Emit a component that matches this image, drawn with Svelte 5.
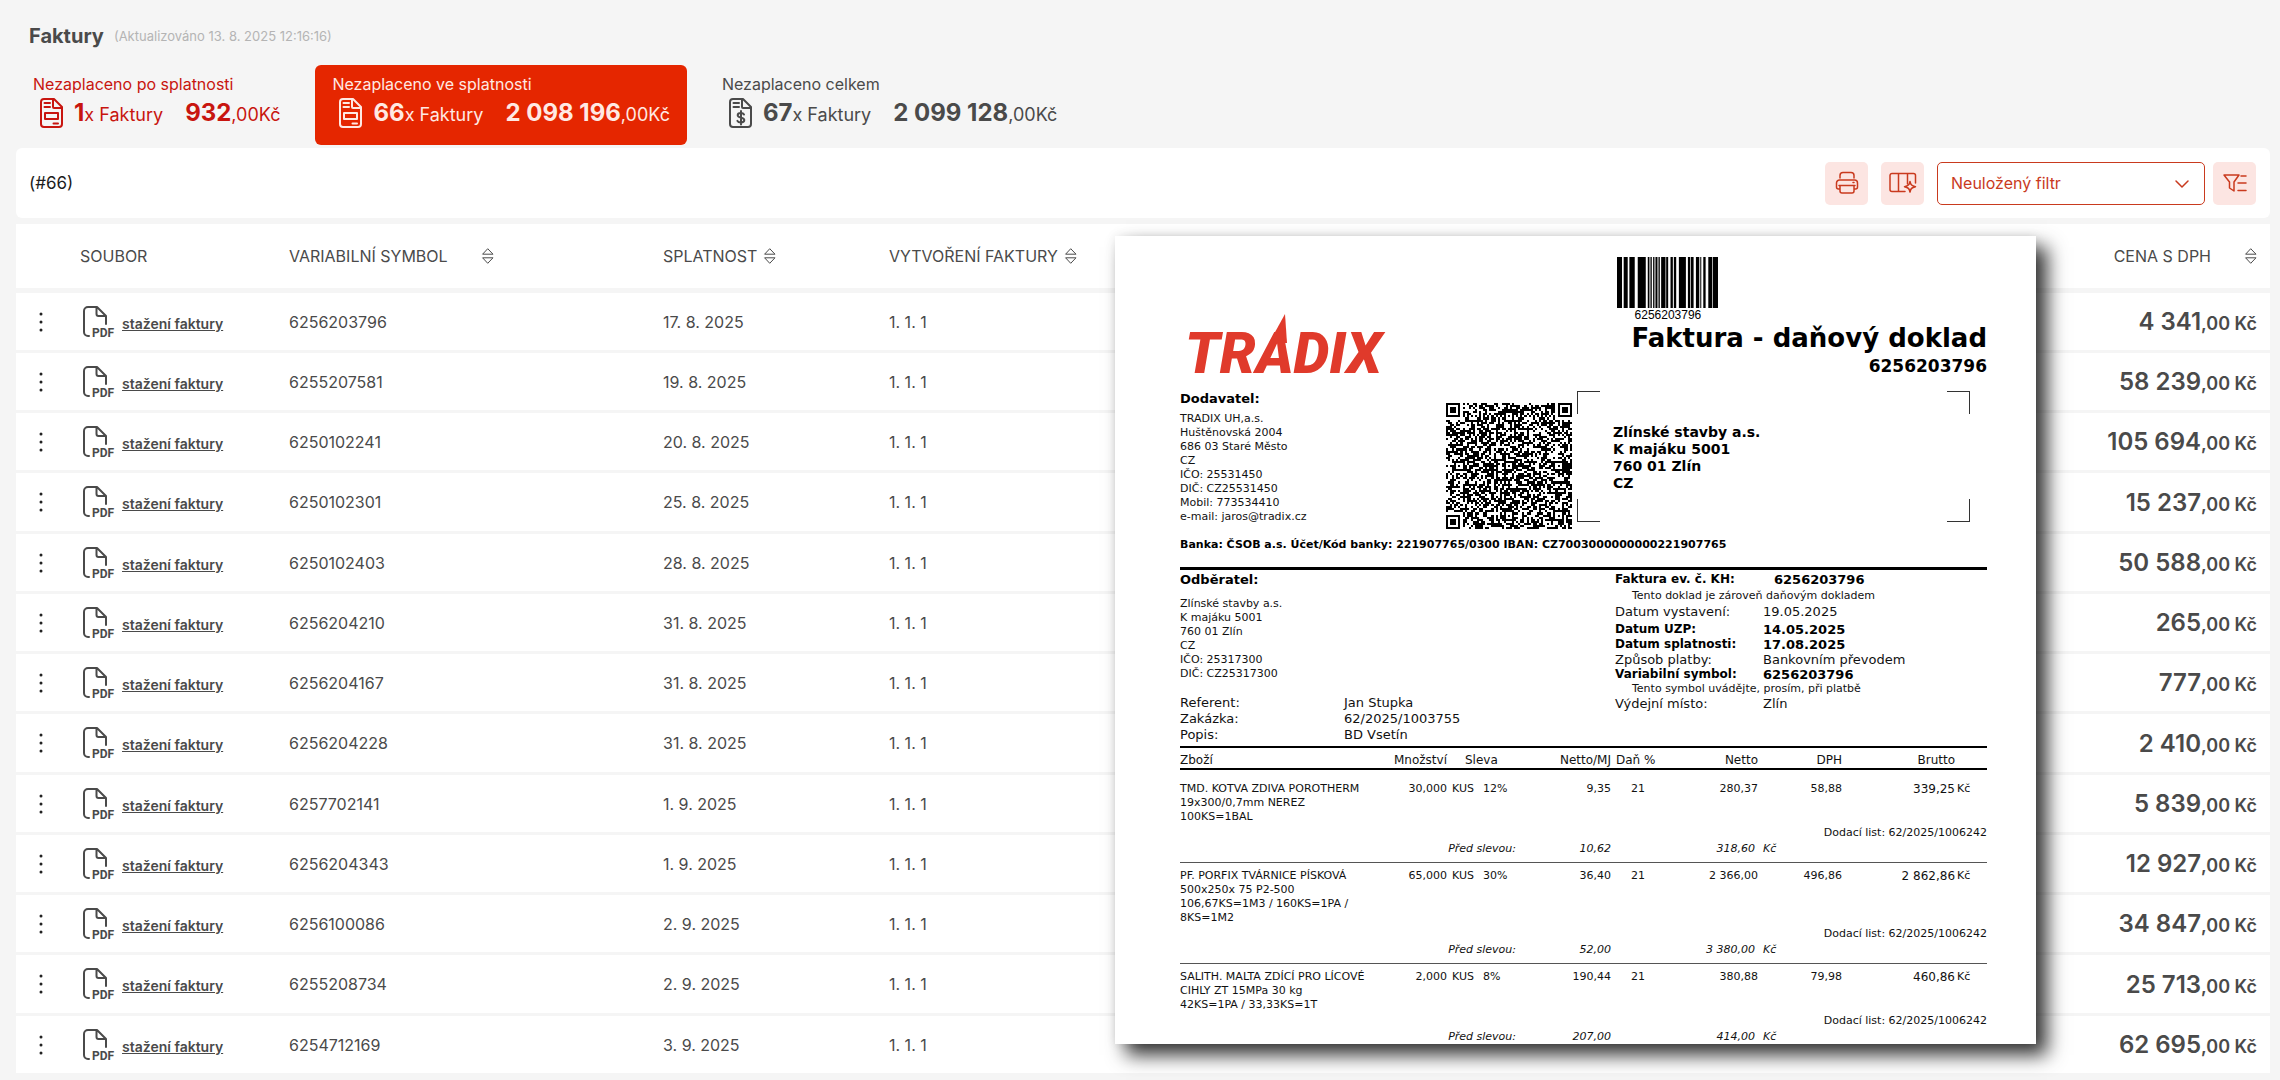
<script lang="ts">
	interface Invoice {
		symbol: string;
		due: string;
		price: string;
	}

	interface Item {
		lines: string[];
		qty: string;
		discount: string;
		unitPrice: string;
		net: string;
		vat: string;
		gross: string;
		unitBefore: string;
		netBefore: string;
	}

	const tabs = [
		{ label: 'Nezaplaceno po splatnosti', count: 1, amount: '932', kind: 'overdue' },
		{ label: 'Nezaplaceno ve splatnosti', count: 66, amount: '2 098 196', kind: 'pending' },
		{ label: 'Nezaplaceno celkem', count: 67, amount: '2 099 128', kind: 'total' }
	];

	let activeTab = $state('pending');

	const invoices: Invoice[] = [
		{ symbol: '6256203796', due: '17. 8. 2025', price: '4 341' },
		{ symbol: '6255207581', due: '19. 8. 2025', price: '58 239' },
		{ symbol: '6250102241', due: '20. 8. 2025', price: '105 694' },
		{ symbol: '6250102301', due: '25. 8. 2025', price: '15 237' },
		{ symbol: '6250102403', due: '28. 8. 2025', price: '50 588' },
		{ symbol: '6256204210', due: '31. 8. 2025', price: '265' },
		{ symbol: '6256204167', due: '31. 8. 2025', price: '777' },
		{ symbol: '6256204228', due: '31. 8. 2025', price: '2 410' },
		{ symbol: '6257702141', due: '1. 9. 2025', price: '5 839' },
		{ symbol: '6256204343', due: '1. 9. 2025', price: '12 927' },
		{ symbol: '6256100086', due: '2. 9. 2025', price: '34 847' },
		{ symbol: '6255208734', due: '2. 9. 2025', price: '25 713' },
		{ symbol: '6254712169', due: '3. 9. 2025', price: '62 695' }
	];

	const supplier = [
		'TRADIX UH,a.s.', 'Huštěnovská 2004', '686 03 Staré Město', 'CZ',
		'IČO: 25531450', 'DIČ: CZ25531450', 'Mobil: 773534410', 'e-mail: jaros@tradix.cz'
	];
	const address = ['Zlínské stavby a.s.', 'K majáku 5001', '760 01 Zlín', 'CZ'];
	const customer = [...address, 'IČO: 25317300', 'DIČ: CZ25317300'];

	const items: Item[] = [
		{
			lines: ['TMD. KOTVA ZDIVA POROTHERM', '19x300/0,7mm NEREZ', '100KS=1BAL'],
			qty: '30,000', discount: '12%', unitPrice: '9,35', net: '280,37', vat: '58,88',
			gross: '339,25', unitBefore: '10,62', netBefore: '318,60'
		},
		{
			lines: ['PF. PORFIX TVÁRNICE PÍSKOVÁ', '500x250x 75 P2-500', '106,67KS=1M3 / 160KS=1PA /', '8KS=1M2'],
			qty: '65,000', discount: '30%', unitPrice: '36,40', net: '2 366,00', vat: '496,86',
			gross: '2 862,86', unitBefore: '52,00', netBefore: '3 380,00'
		},
		{
			lines: ['SALITH. MALTA ZDÍCÍ PRO LÍCOVÉ', 'CIHLY ZT 15MPa 30 kg', '42KS=1PA / 33,33KS=1T'],
			qty: '2,000', discount: '8%', unitPrice: '190,44', net: '380,88', vat: '79,98',
			gross: '460,86', unitBefore: '207,00', netBefore: '414,00'
		}
	];

	// [start, width] of every bar
	const bars = [
		[0, 15], [20, 12], [37, 16], [62, 24], [92, 5], [100, 4], [108, 4], [115, 6], [124, 4],
		[132, 13], [147, 6], [160, 7], [170, 7], [185, 21], [212, 7], [221, 8], [236, 10],
		[249, 3], [258, 7], [273, 12], [287, 15]
	];

	const QR_SIZE = 61;

	function squareRing(dx: number, dy: number): number {
		return Math.max(Math.abs(dx), Math.abs(dy));
	}

	// Finder and alignment squares sit on a seeded module pattern
	function buildQr(): string {
		const finders = [[3, 3], [QR_SIZE - 4, 3], [3, QR_SIZE - 4]];
		const aligns = [[30, 6], [6, 30], [30, 30], [54, 30], [30, 54], [54, 54]];
		let seed = 6256;
		let d = '';
		for (let y = 0; y < QR_SIZE; y++) {
			for (let x = 0; x < QR_SIZE; x++) {
				seed = (seed * 1103515245 + 12345) % 2147483648;
				let on = (seed >> 12) % 100 < 56;
				if (x === 6 || y === 6) on = (x + y) % 2 === 0;
				for (const [cx, cy] of aligns) {
					const r = squareRing(x - cx, y - cy);
					if (r <= 2) on = r !== 1;
				}
				for (const [cx, cy] of finders) {
					const r = squareRing(x - cx, y - cy);
					if (r <= 4) on = r === 3 || r <= 1;
				}
				if (on) d += `M${x} ${y}h1v1h-1z`;
			}
		}
		return d;
	}

	const qrPath = buildQr();
</script>

{#snippet sortIcon()}
	<svg class="sort-icon" viewBox="0 0 12 16" width="12" height="16" aria-hidden="true">
		<path d="M6 1 11 6.2H1zM1 9.8h10L6 15z" />
	</svg>
{/snippet}

<main class="page">
	<header class="head">
		<h1>Faktury</h1>
		<span class="updated">(Aktualizováno 13. 8. 2025 12:16:16)</span>
	</header>

	<nav class="tabs">
		{#each tabs as tab}
			<button
				type="button"
				class="tab {tab.kind}"
				class:active={activeTab === tab.kind}
				onclick={() => (activeTab = tab.kind)}
			>
				<span class="tab-label">{tab.label}</span>
				<span class="tab-row">
					<svg class="tab-icon" viewBox="0 0 23 30" width="23" height="30" aria-hidden="true">
						<path d="M4 1h10l8 8v17a3 3 0 0 1-3 3H4a3 3 0 0 1-3-3V4a3 3 0 0 1 3-3z" />
						<path d="M13 1v8a1 1 0 0 0 1 1h8M4.500 5H10M4.500 9H10" />
						{#if tab.kind === 'total'}
							<path d="M15 16.500c-.5-1-1.700-1.500-3.200-1.500-1.900 0-3.100.9-3.100 2.300 0 3.200 6.600 1.400 6.600 4.800 0 1.500-1.400 2.400-3.400 2.400-1.700 0-3-.6-3.500-1.700M12 13v13.500" />
						{:else}
							<path d="M5 15h13v6H5zM13.500 25.500H18" />
						{/if}
					</svg>
					<span class="tab-count"><b>{tab.count}</b>x Faktury</span>
					<span class="tab-amount"><b>{tab.amount}</b>,00Kč</span>
				</span>
			</button>
		{/each}
	</nav>

	<section class="toolbar">
		<span class="total-count">(#66)</span>
		<div class="tools">
			<button type="button" class="tool" aria-label="Tisk">
				<svg viewBox="0 0 24 24" width="24" height="24" aria-hidden="true">
					<path d="M5 7V4.500a3 3 0 0 1 3-3h8a3 3 0 0 1 3 3V7M5 18H3.500A2 2 0 0 1 1.500 16v-4a3 3 0 0 1 3-3h15a3 3 0 0 1 3 3v4a2 2 0 0 1-2 2H19M4 14.500h16M5 14.500V20a2 2 0 0 0 2 2h10a2 2 0 0 0 2-2v-5.500M18 11.500h1" />
				</svg>
			</button>
			<button type="button" class="tool" aria-label="Sloupce">
				<svg viewBox="0 0 28 24" width="28" height="24" aria-hidden="true">
					<path d="M16 20.500H3a2 2 0 0 1-2-2v-14a2 2 0 0 1 2-2h21.500a2 2 0 0 1 2 2V12M9.500 2.500v18M18.500 2.500V13" />
					<path d="M21 10.500c.7 3.400 1.700 4.300 5.500 5.200-3.800.9-4.800 1.900-5.500 5.300-.7-3.400-1.700-4.400-5.500-5.300 3.800-.9 4.800-1.800 5.500-5.200z" />
				</svg>
			</button>
			<div class="filter">
				<select aria-label="Filtr">
					<option>Neuložený filtr</option>
				</select>
				<svg class="chevron" viewBox="0 0 14 8" width="14" height="8" aria-hidden="true">
					<path d="M1 1l6 6 6-6" />
				</svg>
			</div>
			<button type="button" class="tool" aria-label="Nastavení filtru">
				<svg viewBox="0 0 24 24" width="24" height="24" aria-hidden="true">
					<path d="M1 4h15l-5 7v9l-4.500-3v-6zM18 5h5M15 12h8M15 19.500h8" />
				</svg>
			</button>
		</div>
	</section>

	<table class="invoices">
		<colgroup>
			<col class="col-menu" />
			<col class="col-file" />
			<col class="col-symbol" />
			<col class="col-due" />
			<col class="col-created" />
			<col />
		</colgroup>
		<thead>
			<tr>
				<th></th>
				<th>SOUBOR</th>
				<th><span class="th-wide">VARIABILNÍ SYMBOL {@render sortIcon()}</span></th>
				<th><span class="th-sort">SPLATNOST {@render sortIcon()}</span></th>
				<th><span class="th-sort">VYTVOŘENÍ FAKTURY {@render sortIcon()}</span></th>
				<th class="price-head"><span class="th-wide">CENA S DPH {@render sortIcon()}</span></th>
			</tr>
		</thead>
		<tbody>
			{#each invoices as invoice}
				<tr>
					<td>
						<button type="button" class="menu" aria-label="Možnosti">
							<svg viewBox="0 0 4 20" width="4" height="20" aria-hidden="true">
								<circle cx="2" cy="2" r="1.500" />
								<circle cx="2" cy="10" r="1.500" />
								<circle cx="2" cy="18" r="1.500" />
							</svg>
						</button>
					</td>
					<td>
						<a href="#{invoice.symbol}" class="download">
							<svg viewBox="0 0 31 32" width="31" height="32" aria-hidden="true">
								<path d="M6 30H5a4 4 0 0 1-4-4V5a4 4 0 0 1 4-4h9l9 9v8M13.500 1v7a2 2 0 0 0 2 2H23" />
								<text x="9" y="31">PDF</text>
							</svg>
							<span>stažení faktury</span>
						</a>
					</td>
					<td>{invoice.symbol}</td>
					<td>{invoice.due}</td>
					<td>1. 1. 1</td>
					<td class="price"><b>{invoice.price}</b>,00 Kč</td>
				</tr>
			{/each}
		</tbody>
	</table>

	<article class="doc">
		<header class="doc-head">
			<svg class="logo" viewBox="0 0 204 60" width="204" height="60" role="img" aria-label="TRADIX">
				<text x="-3" y="60">TRADIX</text>
				<polygon points="97,1 99,30 81,30" />
			</svg>
			<div class="doc-title">
				<div class="barcode">
					<svg viewBox="0 0 302 51" width="101" height="51" preserveAspectRatio="none" aria-hidden="true">
						{#each bars as [x, w]}
							<rect {x} y="0" width={w} height="51" />
						{/each}
					</svg>
					<span>6256203796</span>
				</div>
				<h2>Faktura - daňový doklad</h2>
				<strong>6256203796</strong>
			</div>
		</header>

		<section class="parties">
			<div class="party">
				<h3>Dodavatel:</h3>
				{#each supplier as line}
					<p>{line}</p>
				{/each}
			</div>
			<svg class="qr" viewBox="0 0 61 61" width="126" height="126" shape-rendering="crispEdges" aria-hidden="true">
				<path d={qrPath} />
			</svg>
			<div class="window">
				<i class="corner tl"></i>
				<i class="corner tr"></i>
				<i class="corner bl"></i>
				<i class="corner br"></i>
				{#each address as line}
					<p>{line}</p>
				{/each}
			</div>
		</section>

		<p class="bank">Banka: ČSOB a.s. Účet/Kód banky: 221907765/0300 IBAN: CZ7003000000000221907765</p>

		<section class="details">
			<div>
				<div class="party customer">
					<h3>Odběratel:</h3>
					{#each customer as line}
						<p>{line}</p>
					{/each}
				</div>
				<dl class="order">
					<dt>Referent:</dt>
					<dd>Jan Stupka</dd>
					<dt>Zakázka:</dt>
					<dd>62/2025/1003755</dd>
					<dt>Popis:</dt>
					<dd>BD Vsetín</dd>
				</dl>
			</div>
			<dl class="dates">
				<dt class="strong">Faktura ev. č. KH:</dt>
				<dd class="strong evidence">6256203796</dd>
				<dd class="note">Tento doklad je zároveň daňovým dokladem</dd>
				<dt class="issued">Datum vystavení:</dt>
				<dd class="issued">19.05.2025</dd>
				<dt class="strong">Datum UZP:</dt>
				<dd class="strong">14.05.2025</dd>
				<dt class="strong">Datum splatnosti:</dt>
				<dd class="strong">17.08.2025</dd>
				<dt>Způsob platby:</dt>
				<dd>Bankovním převodem</dd>
				<dt class="strong">Variabilní symbol:</dt>
				<dd class="strong">6256203796</dd>
				<dd class="note">Tento symbol uvádějte, prosím, při platbě</dd>
				<dt>Výdejní místo:</dt>
				<dd>Zlín</dd>
			</dl>
		</section>

		<table class="items">
			<colgroup>
				<col class="c-name" />
				<col class="c-qty" />
				<col class="c-unit" />
				<col class="c-disc" />
				<col class="c-price" />
				<col class="c-tax" />
				<col class="c-net" />
				<col class="c-vat" />
				<col class="c-gross" />
				<col />
			</colgroup>
			<thead>
				<tr>
					<th class="left">Zboží</th>
					<th>Množství</th>
					<th colspan="2" class="left disc-head">Sleva</th>
					<th>Netto/MJ</th>
					<th class="left tax-head">Daň %</th>
					<th>Netto</th>
					<th>DPH</th>
					<th>Brutto</th>
					<th></th>
				</tr>
			</thead>
			{#each items as item}
				<tbody>
					<tr class="main">
						<td class="left">
							{#each item.lines as line}
								<div>{line}</div>
							{/each}
						</td>
						<td>{item.qty}</td>
						<td class="left unit">KUS</td>
						<td class="left disc">{item.discount}</td>
						<td>{item.unitPrice}</td>
						<td class="left tax">21</td>
						<td>{item.net}</td>
						<td>{item.vat}</td>
						<td class="gross">{item.gross}</td>
						<td class="left currency">Kč</td>
					</tr>
					<tr class="delivery">
						<td colspan="10">Dodací list: 62/2025/1006242</td>
					</tr>
					<tr class="before">
						<td colspan="4" class="before-label">Před slevou:</td>
						<td>{item.unitBefore}</td>
						<td></td>
						<td class="before-net">{item.netBefore}</td>
						<td class="left unit">Kč</td>
						<td colspan="2"></td>
					</tr>
				</tbody>
			{/each}
		</table>
	</article>
</main>

<style>
	:global(body) {
		background: #f5f5f5;
	}

	.page {
		position: relative;
		box-sizing: border-box;
		min-height: 100vh;
		padding: 20px 10px 0 16px;
		background: #f5f5f5;
		color: #4a4a4a;
		font-family: Inter, "Liberation Sans", sans-serif;
		font-size: 16px;
	}

	button,
	select {
		font: inherit;
		color: inherit;
		cursor: pointer;
	}

	svg {
		display: block;
		flex-shrink: 0;
		overflow: visible;
		fill: none;
		stroke: currentColor;
		stroke-width: 2;
		stroke-linecap: round;
		stroke-linejoin: round;
	}

	h1,
	h2,
	h3,
	p,
	dl,
	dd {
		margin: 0;
	}

	.head {
		display: flex;
		align-items: center;
		gap: 10px;
		height: 32px;
		padding-left: 13px;
	}

	h1 {
		font-size: 20px;
		font-weight: 700;
	}

	.updated {
		font-size: 13px;
		color: #b4b4b4;
	}

	/* Summary tabs */
	.tabs {
		display: flex;
		gap: 18px;
		margin-top: 13px;
	}

	.tab {
		display: flex;
		flex-direction: column;
		box-sizing: border-box;
		height: 80px;
		padding: 9px 17px;
		border: 0;
		border-radius: 6px;
		background: none;
		text-align: left;
	}

	.tab.overdue {
		color: #c8150f;
	}

	.tab.active {
		background: #e52600;
		color: #ffe9e3;
	}

	.tab-label {
		font-size: 16px;
		line-height: 21px;
	}

	.tab-row {
		display: flex;
		align-items: center;
		gap: 11px;
		height: 36px;
		padding-left: 7px;
	}

	.tab-row b {
		font-size: 24px;
	}

	.tab-count,
	.tab-amount {
		padding-top: 2px;
		font-size: 18px;
		line-height: 30px;
		white-space: nowrap;
	}

	.tab-amount {
		padding-left: 11px;
	}

	/* Toolbar */
	.toolbar {
		display: flex;
		align-items: center;
		justify-content: space-between;
		height: 70px;
		margin-top: 3px;
		padding: 0 14px 0 13px;
		border-radius: 6px;
		background: #fff;
	}

	.total-count {
		font-size: 17px;
		color: #1c1c1c;
	}

	.tools {
		display: flex;
		align-items: center;
		gap: 13px;
		color: #c93a1e;
	}

	.tool {
		display: flex;
		align-items: center;
		justify-content: center;
		width: 43px;
		height: 43px;
		padding: 0;
		border: 0;
		border-radius: 5px;
		background: #fce5e2;
	}

	.tool svg {
		stroke-width: 1.500;
	}

	.filter {
		position: relative;
		margin-right: -5px;
	}

	.filter select {
		appearance: none;
		width: 268px;
		height: 43px;
		padding: 0 13px;
		border: 1px solid #c93a1e;
		border-radius: 5px;
		background: #fff;
		font-size: 16px;
	}

	.chevron {
		position: absolute;
		top: 18px;
		right: 16px;
		stroke-width: 1.500;
		pointer-events: none;
	}

	/* Invoice list */
	table {
		width: 100%;
		border-collapse: collapse;
		table-layout: fixed;
	}

	.invoices {
		margin-top: 6px;
		background: #fff;
	}

	.col-menu {
		width: 64px;
	}

	.col-file {
		width: 209px;
	}

	.col-symbol {
		width: 374px;
	}

	.col-due {
		width: 226px;
	}

	.col-created {
		width: 300px;
	}

	.invoices th {
		height: 64px;
		padding: 0;
		border-bottom: 5px solid #f5f5f5;
		font-weight: 400;
		text-align: left;
	}

	.invoices td {
		height: 57px;
		padding: 0;
		border-bottom: 3px solid #f5f5f5;
	}

	.invoices tbody tr:nth-child(4n) td {
		height: 58px;
	}

	.sort-icon {
		stroke-width: 1;
	}

	.th-sort,
	.th-wide {
		display: inline-flex;
		align-items: center;
		gap: 7px;
	}

	.th-wide {
		gap: 34px;
	}

	.invoices .price-head,
	.invoices .price {
		padding-right: 13px;
		text-align: right;
	}

	.menu {
		display: block;
		margin-left: 17px;
		padding: 4px 6px;
		border: 0;
		background: none;
		color: #222;
	}

	.menu svg {
		fill: currentColor;
		stroke: none;
	}

	.download {
		display: flex;
		align-items: center;
		gap: 8px;
		padding-left: 3px;
		color: inherit;
		font-size: 14px;
		font-weight: 600;
	}

	.download span {
		padding-top: 3px;
	}

	.download text {
		fill: currentColor;
		stroke: none;
		font: 700 12px Roboto, sans-serif;
	}

	.invoices .price {
		font-size: 18px;
		font-weight: 600;
	}

	.price b {
		font-size: 24px;
		font-weight: 600;
	}

	/* Invoice document lying over the list */
	.doc {
		position: absolute;
		top: 236px;
		right: 244px;
		box-sizing: border-box;
		width: 921px;
		padding: 21px 49px 0 65px;
		background: #fff;
		box-shadow: 11px 11px 18px rgba(0, 0, 0, 0.8), 0 0 10px rgba(0, 0, 0, 0.08);
		color: #111;
		font: 11px/14px "DejaVu Sans", Verdana, sans-serif;
	}

	.doc-head {
		display: flex;
		align-items: flex-end;
		justify-content: space-between;
	}

	.logo {
		margin: 0 0 4px 8px;
		fill: #e03a2b;
		stroke: none;
	}

	.logo text {
		font: italic 900 57px Roboto, sans-serif;
	}

	.doc-title {
		display: flex;
		flex-direction: column;
		align-items: flex-end;
		color: #000;
	}

	.barcode {
		align-self: flex-start;
		margin-left: -14px;
		text-align: center;
		font: 12px/14px "Liberation Sans", sans-serif;
	}

	.barcode svg,
	.qr {
		fill: #000;
		stroke: none;
	}

	h2 {
		font-size: 26px;
		line-height: 33px;
	}

	.doc-title strong {
		font-size: 17px;
		line-height: 22px;
	}

	.parties {
		display: grid;
		grid-template-columns: 266px 131px 393px;
		padding-top: 14px;
	}

	h3 {
		margin-bottom: 5px;
		font-size: 13px;
		line-height: 16px;
		color: #000;
	}

	.qr {
		margin-top: 12px;
	}

	.window {
		position: relative;
		box-sizing: border-box;
		height: 131px;
		padding: 33px 36px 0;
		color: #000;
		font-size: 14px;
		font-weight: 700;
		line-height: 17px;
	}

	.corner {
		position: absolute;
		width: 22px;
		height: 22px;
		border: 0 solid #333;
	}

	.tl {
		top: 0;
		left: 0;
		border-width: 1px 0 0 1px;
	}

	.tr {
		top: 0;
		right: 0;
		border-width: 1px 1px 0 0;
	}

	.bl {
		bottom: 0;
		left: 0;
		border-width: 0 0 1px 1px;
	}

	.br {
		right: 0;
		bottom: 0;
		border-width: 0 1px 1px 0;
	}

	.bank {
		padding: 9px 0 15px;
		border-bottom: 3px solid #000;
		color: #000;
		font-weight: 700;
		white-space: nowrap;
	}

	.details {
		display: grid;
		grid-template-columns: 435px 1fr;
		padding: 2px 0 3px;
	}

	.customer h3 {
		margin-bottom: 9px;
	}

	.order,
	.dates {
		display: grid;
		grid-template-columns: 164px 1fr;
		align-content: start;
		font-size: 13px;
		line-height: 16px;
	}

	.order {
		margin-top: 14px;
	}

	.dates {
		grid-template-columns: 148px 1fr;
		line-height: 15px;
	}

	.dates .note {
		grid-column: 1 / -1;
		padding-left: 17px;
		font-size: 11px;
		line-height: 14px;
	}

	.dates .evidence {
		padding-left: 11px;
	}

	.dates .evidence + .note {
		padding-top: 2px;
	}

	.dates .issued {
		padding: 1px 0 3px;
	}

	.strong {
		color: #000;
		font-weight: 700;
	}

	dt.strong {
		font-size: 12px;
	}

	/* Invoice items */
	.items {
		border-top: 2px solid #000;
	}

	.c-name {
		width: 205px;
	}

	.c-qty {
		width: 62px;
	}

	.c-unit {
		width: 33px;
	}

	.c-disc {
		width: 40px;
	}

	.c-price {
		width: 91px;
	}

	.c-tax {
		width: 49px;
	}

	.c-net {
		width: 98px;
	}

	.c-vat {
		width: 84px;
	}

	.c-gross {
		width: 113px;
	}

	.items th,
	.items td {
		padding: 0;
		text-align: right;
		vertical-align: top;
		white-space: nowrap;
	}

	.items th {
		padding: 5px 0 1px;
		border-bottom: 2px solid #000;
		font-size: 12px;
		font-weight: 400;
	}

	.items .left {
		text-align: left;
	}

	.items .disc-head {
		padding-left: 18px;
	}

	.items .tax-head,
	.items .unit {
		padding-left: 5px;
	}

	.items .disc {
		padding-left: 3px;
	}

	.items .tax {
		padding-left: 20px;
	}

	.items .currency {
		padding-left: 2px;
	}

	.items .gross {
		font-size: 12px;
	}

	.items .main td {
		padding-top: 6px;
	}

	.items thead + tbody .main td {
		padding-top: 12px;
	}

	.items .delivery td {
		padding-top: 2px;
	}

	.items .before td {
		padding-top: 2px;
		padding-bottom: 6px;
		border-bottom: 1px solid #555;
		font-style: italic;
	}

	.items .before .before-label {
		padding-right: 4px;
	}

	.items .before .before-net {
		padding-right: 3px;
	}

	.items tbody:last-child .before td {
		padding-bottom: 0;
		border-bottom: 0;
	}
</style>
